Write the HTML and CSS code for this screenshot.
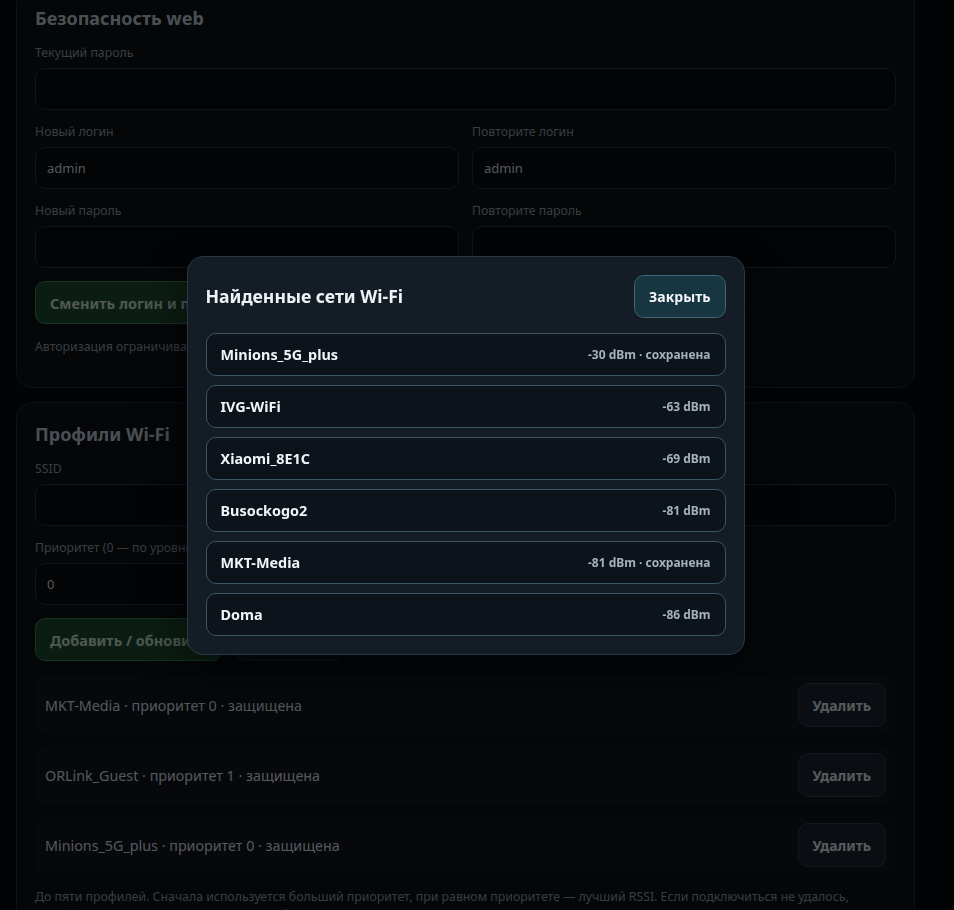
FILE: index.html
```html
<!DOCTYPE html>
<html lang="ru">
<head>
<meta charset="utf-8">
<title>Настройки</title>
<link rel="stylesheet" href="styles.css">
</head>
<body>
<main class="page">
  <section class="card card-first">
    <h2 class="card-title">Безопасность web</h2>
    <div class="field">
      <label class="label">Текущий пароль</label>
      <input class="input" type="password" value="">
    </div>
    <div class="grid2">
      <div class="field">
        <label class="label">Новый логин</label>
        <input class="input" type="text" value="admin">
      </div>
      <div class="field">
        <label class="label">Повторите логин</label>
        <input class="input" type="text" value="admin">
      </div>
    </div>
    <div class="grid2">
      <div class="field">
        <label class="label">Новый пароль</label>
        <input class="input" type="password" value="">
      </div>
      <div class="field">
        <label class="label">Повторите пароль</label>
        <input class="input" type="password" value="">
      </div>
    </div>
    <div class="actions">
      <button class="btn btn-green">Сменить логин и пароль</button>
    </div>
    <p class="note">Авторизация ограничивает доступ к настройкам из локальной сети. Не открывайте порт 80 в интернет.</p>
  </section>

  <section class="card">
    <h2 class="card-title">Профили Wi-Fi</h2>
    <div class="grid2">
      <div class="field">
        <label class="label">SSID</label>
        <input class="input" type="text" value="">
      </div>
      <div class="field">
        <label class="label">Пароль</label>
        <input class="input" type="password" value="">
      </div>
    </div>
    <div class="grid2">
      <div class="field">
        <label class="label">Приоритет (0 — по уровню сигнала)</label>
        <input class="input" type="text" value="0">
      </div>
      <div></div>
    </div>
    <div class="actions">
      <button class="btn btn-green">Добавить / обновить</button>
      <button class="btn btn-dark">Сканировать</button>
    </div>
    <ul class="profiles">
      <li class="profile"><span>MKT-Media · приоритет 0 · защищена</span><button class="btn btn-del">Удалить</button></li>
      <li class="profile"><span>ORLink_Guest · приоритет 1 · защищена</span><button class="btn btn-del">Удалить</button></li>
      <li class="profile"><span>Minions_5G_plus · приоритет 0 · защищена</span><button class="btn btn-del">Удалить</button></li>
    </ul>
    <p class="note">До пяти профилей. Сначала используется больший приоритет, при равном приоритете — лучший RSSI. Если подключиться не удалось, устройство переходит к следующему профилю.</p>
  </section>
</main>

<div class="backdrop">
  <div class="modal">
    <div class="modal-head">
      <h3 class="modal-title">Найденные сети Wi-Fi</h3>
      <button class="btn btn-close">Закрыть</button>
    </div>
    <ul class="nets">
      <li class="net"><span class="net-name">Minions_5G_plus</span><span class="net-meta">-30 dBm · сохранена</span></li>
      <li class="net"><span class="net-name">IVG-WiFi</span><span class="net-meta">-63 dBm</span></li>
      <li class="net"><span class="net-name">Xiaomi_8E1C</span><span class="net-meta">-69 dBm</span></li>
      <li class="net"><span class="net-name">Busockogo2</span><span class="net-meta">-81 dBm</span></li>
      <li class="net"><span class="net-name">MKT-Media</span><span class="net-meta">-81 dBm · сохранена</span></li>
      <li class="net"><span class="net-name">Doma</span><span class="net-meta">-86 dBm</span></li>
    </ul>
  </div>
</div>
</body>
</html>
```
FILE: styles.css
```css
* { box-sizing: border-box; }

html, body {
  margin: 0;
  padding: 0;
  height: 910px;
  overflow: hidden;
  background: #05080c;
}

body {
  font-family: "Noto Sans", "Open Sans", sans-serif;
  color: #d5dde5;
}

.page {
  width: 931px;
  padding: 0 16px;
  margin-top: -13px;
  display: flex;
  flex-direction: column;
  gap: 14px;
}

.card {
  background: #0b1016;
  border: 1px solid #232c36;
  border-radius: 16px;
  padding: 19px 18px 30px;
  display: flex;
  flex-direction: column;
  gap: 13px;
}

.card-first {
  padding-top: 18px;
  padding-bottom: 31px;
}

.card-title {
  margin: 0 0 1px;
  font-size: 18px;
  line-height: 24px;
  font-weight: 700;
  color: #bcc6d0;
}

.field {
  display: flex;
  flex-direction: column;
  gap: 6px;
  min-width: 0;
}

.label {
  font-size: 12.3px;
  line-height: 18px;
  color: #8e9aa6;
  white-space: nowrap;
}

.input {
  height: 42px;
  width: 100%;
  background: #070a0e;
  border: 1px solid #2a3642;
  border-radius: 10px;
  padding: 0 11px;
  font-family: inherit;
  font-size: 13px;
  color: #d5dde5;
  outline: none;
}

.grid2 {
  display: grid;
  grid-template-columns: 1fr 1fr;
  gap: 13px;
}

.actions {
  display: flex;
  gap: 12px;
}

.btn {
  font-family: inherit;
  font-weight: 700;
  font-size: 14.5px;
  border-radius: 10px;
  cursor: pointer;
}

.btn-green {
  height: 43px;
  padding: 0 14px;
  background: #1d4a2f;
  border: 1px solid #3c8553;
  color: #c3dccd;
}

.btn-dark {
  height: 43px;
  padding: 0 14px;
  width: 108px;
  background: #121a22;
  border: 1px solid #2a3642;
  color: #d5dde5;
}

.note {
  margin: 1px 0 0;
  font-size: 12.3px;
  line-height: 18px;
  color: #8e9aa6;
}

.profiles {
  list-style: none;
  margin: 2px 0 0;
  padding: 0;
  display: flex;
  flex-direction: column;
  gap: 12px;
}

.profile {
  display: flex;
  align-items: center;
  justify-content: space-between;
  background: #0f151c;
  border-radius: 12px;
  padding: 7px 10px;
  font-size: 14.3px;
  color: #d5dde5;
}

.btn-del {
  height: 44px;
  padding: 0 14px;
  font-size: 14px;
  background: #1b252f;
  border: 1px solid #303e4b;
  color: #d9e0e6;
}

/* modal */
.backdrop {
  position: fixed;
  inset: 0;
  background: rgba(0, 0, 0, 0.6);
  display: flex;
  align-items: center;
  justify-content: center;
  padding-right: 23px;
}

.modal {
  width: 558px;
  background: #141c25;
  border: 1px solid #2a3845;
  border-radius: 16px;
  padding: 18px 18px 18px;
  box-shadow: 0 20px 60px rgba(0, 0, 0, 0.6);
}

.modal-head {
  display: flex;
  align-items: center;
  justify-content: space-between;
  margin-bottom: 15px;
}

.modal-title {
  margin: 0;
  font-size: 17.6px;
  font-weight: 700;
  color: #eef2f5;
}

.btn-close {
  height: 43px;
  padding: 0 14px;
  font-size: 14px;
  background: #173642;
  border: 1px solid #3d6676;
  color: #f1f5f8;
}

.nets {
  list-style: none;
  margin: 0;
  padding: 0;
  display: flex;
  flex-direction: column;
  gap: 9px;
}

.net {
  height: 43px;
  display: flex;
  align-items: center;
  justify-content: space-between;
  background: #0c131a;
  border: 1px solid #3a5664;
  border-radius: 10px;
  padding: 0 14px;
}

.net-name {
  font-size: 14.4px;
  font-weight: 700;
  color: #f1f5f8;
}

.net-meta {
  font-size: 12px;
  font-weight: 700;
  color: #a4b2bc;
}
```
